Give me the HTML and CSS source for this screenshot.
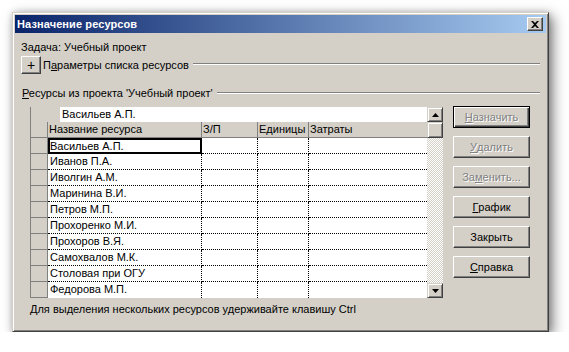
FILE: index.html
```html
<!DOCTYPE html>
<html lang="ru">
<head>
<meta charset="utf-8">
<title>Назначение ресурсов</title>
<link rel="stylesheet" href="styles.css">
</head>
<body>
<div class="stage">
  <div class="dialog">
    <div class="titlebar">
      <span class="title">Назначение ресурсов</span>
      <span class="close"><svg width="8" height="7" viewBox="0 0 8 7"><path d="M0 0h2l2 2 2-2h2L5 3.5 8 7H6L4 5 2 7H0l3-3.5z" fill="#000"/></svg></span>
    </div>
    <div class="client">
      <div class="task">Задача: Учебный проект</div>
      <div class="group-row">
        <span class="btn-plus">+</span>
        <span class="glabel">П<u>а</u>раметры списка ресурсов</span>
        <span class="etch"></span>
      </div>
      <div class="group-row res">
        <span class="glabel"><u>Р</u>есурсы из проекта 'Учебный проект'</span>
        <span class="etch"></span>
      </div>
      <div class="main">
        <div class="grid">
          <div class="grid-body">
            <div class="edit-row"><div class="edit-gap"></div><div class="edit-box">Васильев А.П.</div></div>
            <div class="row head">
              <div class="rh"></div><div class="c c1">Название ресурса</div><div class="c c2">З/П</div><div class="c c3">Единицы</div><div class="c c4">Затраты</div>
            </div>
            <div class="row"><div class="rh"></div><div class="c c1 sel">Васильев А.П.</div><div class="c c2"></div><div class="c c3"></div><div class="c c4"></div></div>
            <div class="row"><div class="rh"></div><div class="c c1">Иванов П.А.</div><div class="c c2"></div><div class="c c3"></div><div class="c c4"></div></div>
            <div class="row"><div class="rh"></div><div class="c c1">Иволгин А.М.</div><div class="c c2"></div><div class="c c3"></div><div class="c c4"></div></div>
            <div class="row"><div class="rh"></div><div class="c c1">Маринина В.И.</div><div class="c c2"></div><div class="c c3"></div><div class="c c4"></div></div>
            <div class="row"><div class="rh"></div><div class="c c1">Петров М.П.</div><div class="c c2"></div><div class="c c3"></div><div class="c c4"></div></div>
            <div class="row"><div class="rh"></div><div class="c c1">Прохоренко М.И.</div><div class="c c2"></div><div class="c c3"></div><div class="c c4"></div></div>
            <div class="row"><div class="rh"></div><div class="c c1">Прохоров В.Я.</div><div class="c c2"></div><div class="c c3"></div><div class="c c4"></div></div>
            <div class="row"><div class="rh"></div><div class="c c1">Самохвалов М.К.</div><div class="c c2"></div><div class="c c3"></div><div class="c c4"></div></div>
            <div class="row"><div class="rh"></div><div class="c c1">Столовая при ОГУ</div><div class="c c2"></div><div class="c c3"></div><div class="c c4"></div></div>
            <div class="row last"><div class="rh"></div><div class="c c1">Федорова М.П.</div><div class="c c2"></div><div class="c c3"></div><div class="c c4"></div></div>
          </div>
          <div class="vscroll">
            <div class="sbtn"><svg width="7" height="4" viewBox="0 0 7 4"><path d="M3.5 0L7 4H0z" fill="#000"/></svg></div>
            <div class="thumb"></div>
            <div class="track"></div>
            <div class="sbtn"><svg width="7" height="4" viewBox="0 0 7 4"><path d="M0 0h7L3.5 4z" fill="#000"/></svg></div>
          </div>
        </div>
        <div class="buttons">
          <div class="btn default disabled"><u>Н</u>азначить</div>
          <div class="btn disabled"><u>У</u>далить</div>
          <div class="btn disabled">За<u>м</u>енить...</div>
          <div class="btn"><u>Г</u>рафик</div>
          <div class="btn">Закрыть</div>
          <div class="btn"><u>С</u>правка</div>
        </div>
      </div>
      <div class="hint">Для выделения нескольких ресурсов удерживайте клавишу Ctrl</div>
    </div>
  </div>
</div>
</body>
</html>
```

FILE: styles.css
```css
html, body {
  margin: 0;
  background: #fff;
}
.stage {
  padding: 12px 0 0 12px;
}
.dialog {
  width: 537px;
  height: 320px;
  box-sizing: border-box;
  background: #d4d0c8;
  border: 1px solid;
  border-color: #d4d0c8 #404040 #404040 #d4d0c8;
  padding: 2px;
  box-shadow: inset 1px 1px #fff, inset -1px -1px #808080, 4px 4px 12px rgba(0,0,0,0.5), 0 0 6px rgba(0,0,0,0.15);
  font-family: "Liberation Sans", Arial, sans-serif;
  font-size: 11px;
  color: #000;
  display: flex;
  flex-direction: column;
}
.titlebar {
  height: 18px;
  background: linear-gradient(to right, #0a246a, #a6caf0);
  display: flex;
  align-items: center;
  justify-content: space-between;
  padding: 0 3px 0 2px;
}
.title {
  color: #fff;
  font-weight: bold;
  font-size: 11px;
  letter-spacing: 0.1px;
}
.close {
  width: 16px;
  height: 14px;
  box-sizing: border-box;
  background: #d4d0c8;
  border: 1px solid;
  border-color: #fff #404040 #404040 #fff;
  box-shadow: inset -1px -1px #808080;
  display: flex;
  align-items: center;
  justify-content: center;
}
.client {
  flex: 1;
  padding: 0 6px 0 6px;
  display: flex;
  flex-direction: column;
}
.task {
  margin-top: 8px;
  line-height: 13px;
}
.group-row {
  margin-top: 2px;
  height: 18px;
  display: flex;
  align-items: center;
}
.group-row.res {
  margin-top: 13px;
  height: 13px;
  padding-left: 1px;
}
.btn-plus {
  width: 20px;
  height: 18px;
  box-sizing: border-box;
  border: 1px solid;
  border-color: #fff #404040 #404040 #fff;
  box-shadow: inset -1px -1px #808080;
  display: flex;
  align-items: center;
  justify-content: center;
  font-size: 14px;
  margin-right: 2px;
}
.glabel {
  white-space: nowrap;
  line-height: 13px;
}
.etch {
  flex: 1;
  height: 0;
  border-top: 1px solid #808080;
  border-bottom: 1px solid #fff;
  margin-left: 4px;
  margin-top: -2px;
}
.main {
  margin-top: 7px;
  display: flex;
  align-items: flex-start;
}
.grid {
  margin-left: 9px;
  width: 413px;
  height: 191px;
  display: flex;
  background: #fff;
}
.grid-body {
  width: 397px;
  display: flex;
  flex-direction: column;
  overflow: hidden;
}
.edit-row {
  height: 15px;
  display: flex;
  flex-shrink: 0;
}
.edit-gap {
  width: 29px;
  background: #d4d0c8;
  border-left: 1px solid #808080;
}
.edit-box {
  flex: 1;
  background: #fff;
  line-height: 15px;
  padding-left: 2px;
}
.row {
  height: 16px;
  display: flex;
  flex-shrink: 0;
}
.rh {
  width: 17px;
  box-sizing: border-box;
  width: 18px;
  background: #d4d0c8;
  border-left: 1px solid #808080;
  border-right: 1px solid #808080;
  border-bottom: 1px solid #808080;
}
.c {
  box-sizing: border-box;
  border-right: 1px dotted #000;
  border-bottom: 1px dotted #000;
  line-height: 15px;
  padding-left: 2px;
  white-space: nowrap;
  overflow: hidden;
}
.c1 { width: 154px; }
.c2 { width: 56px; }
.c3 { width: 51px; }
.c4 { width: 118px; border-right: none; }
.row.head .c {
  background: #d4d0c8;
  border-right: 1px solid #808080;
  border-bottom: 1px solid #808080;
  padding-left: 1px;
}
.row.head .c4 { border-right: none; }
.c.sel {
  border: 2px solid #000;
  line-height: 12px;
  padding-left: 0;
}
.row.last .c { border-bottom: none; }
.vscroll {
  width: 16px;
  display: flex;
  flex-direction: column;
}
.sbtn, .thumb {
  box-sizing: border-box;
  background: #d4d0c8;
  border: 1px solid;
  border-color: #d4d0c8 #404040 #404040 #d4d0c8;
  box-shadow: inset 1px 1px #fff, inset -1px -1px #808080;
}
.sbtn {
  height: 15px;
  display: flex;
  align-items: center;
  justify-content: center;
}
.thumb {
  height: 16px;
}
.track {
  flex: 1;
  background-color: #d4d0c8;
  background-image: conic-gradient(#fff 25%, #d4d0c8 0 50%, #fff 0 75%, #d4d0c8 0);
  background-size: 2px 2px;
}
.buttons {
  margin-left: 10px;
  display: flex;
  flex-direction: column;
  gap: 8px;
  margin-top: -1px;
}
.btn {
  width: 77px;
  height: 22px;
  box-sizing: border-box;
  background: #d4d0c8;
  border: 1px solid;
  border-color: #fff #404040 #404040 #fff;
  box-shadow: inset -1px -1px #808080;
  display: flex;
  align-items: center;
  justify-content: center;
}
.btn.default {
  border-color: #000;
  box-shadow: inset 1px 1px #fff, inset -1px -1px #404040, inset -2px -2px #808080;
}
.btn.disabled {
  color: #808080;
  text-shadow: 1px 1px #fff;
}
.hint {
  margin-top: 5px;
  margin-left: 9px;
  line-height: 13px;
}
```
